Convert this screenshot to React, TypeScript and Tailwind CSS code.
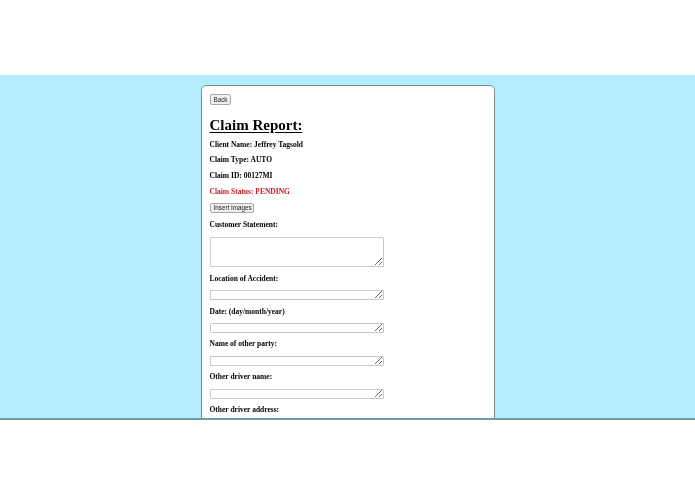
import React from 'react';

const serif = { fontFamily: '"Liberation Serif", "Times New Roman", serif' };

const Label = ({ children, className = '' }: { children: React.ReactNode; className?: string }) => (
  <div className={`text-[7.5px] leading-[10px] font-bold text-black ${className}`}>{children}</div>
);

const Field = ({ className = '' }: { className?: string }) => (
  <textarea
    className={`block w-[174px] bg-white border border-[#c8c8c8] rounded-[1px] ${className}`}
  />
);

const Btn = ({ children, className = '' }: { children: React.ReactNode; className?: string }) => (
  <button
    className={`block h-[10px] px-[3px] bg-[#efefef] border border-[#a9a9a9] rounded-[2px] text-[6.3px] leading-[8px] whitespace-nowrap text-[#222] font-['Liberation_Sans',Arial,sans-serif] ${className}`}
  >
    {children}
  </button>
);

export default function App() {
  return (
    <div className="w-[695px] h-[494px] bg-white" style={serif}>
      <div className="h-[75px]" />
      <section className="h-[345px] bg-[#b3ecfd] border-b-2 border-[#709b9f] overflow-hidden">
        <div className="w-[294px] h-[420px] mx-auto mt-[10px] bg-white border border-[#7d8c92] rounded-[5px] px-[8px] pt-[8px]">
          <Btn className="w-[21px] !h-[11px]">Back</Btn>
          <h1 className="mt-[11px] text-[15px] leading-[18px] font-bold underline underline-offset-[2px]">
            Claim Report:
          </h1>
          <Label className="mt-[6px]">Client Name: Jeffrey Tagsold</Label>
          <Label className="mt-[5px]">Claim Type: AUTO</Label>
          <Label className="mt-[6px]">Claim ID: 00127MI</Label>
          <Label className="mt-[6px] !text-[#c8202a]">Claim Status: PENDING</Label>
          <Btn className="mt-[6px] w-[44px]">Insert Images</Btn>
          <Label className="mt-[7px]">Customer Statement:</Label>
          <Field className="mt-[7px] h-[30px]" />
          <Label className="mt-[7px]">Location of Accident:</Label>
          <Field className="mt-[6px] h-[10px]" />
          <Label className="mt-[7px]">Date: (day/month/year)</Label>
          <Field className="mt-[6px] h-[10px]" />
          <Label className="mt-[6px]">Name of other party:</Label>
          <Field className="mt-[7px] h-[10px]" />
          <Label className="mt-[6px]">Other driver name:</Label>
          <Field className="mt-[7px] h-[10px]" />
          <Label className="mt-[6px]">Other driver address:</Label>
          <Field className="mt-[7px] h-[10px]" />
        </div>
      </section>
    </div>
  );
}
